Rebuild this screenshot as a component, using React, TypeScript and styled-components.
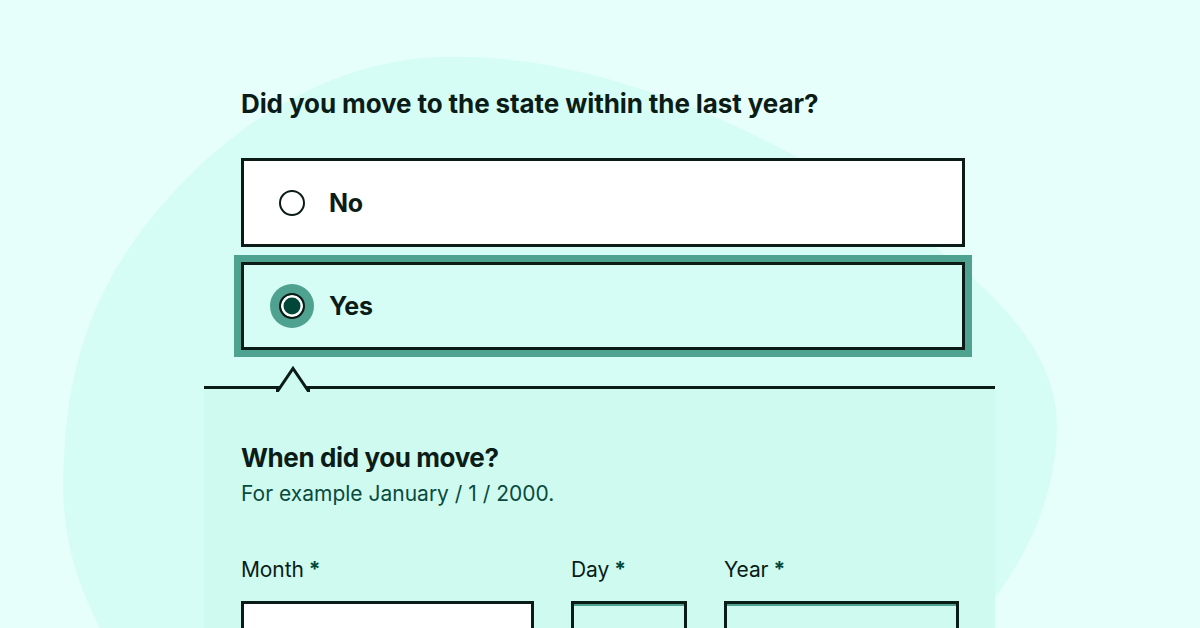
import styled, { createGlobalStyle } from "styled-components";

const GlobalStyle = createGlobalStyle`
  html, body {
    margin: 0;
    padding: 0;
    background: #e6fffa;
  }
  body {
    font-family: Inter, "Noto Sans", sans-serif;
    color: #0b1c17;
  }
`;

const Page = styled.div`
  position: relative;
  width: 1200px;
  height: 628px;
  overflow: hidden;
`;

// decorative blob behind the form
const Blob = styled.svg`
  position: absolute;
  left: 0;
  top: 0;
  z-index: 0;
`;

const Column = styled.main`
  position: relative;
  z-index: 1;
  width: 791px;
  margin-left: 204px;
  padding-top: 84px;
`;

const Fieldset = styled.fieldset`
  border: 0;
  margin: 0;
  padding: 0 30px 0 37px;
  display: flex;
  flex-direction: column;
  gap: 15px;
`;

const Legend = styled.legend`
  padding: 0;
  font-size: 26px;
  line-height: 40px;
  font-weight: 700;
  letter-spacing: -0.1px;
  margin-bottom: 19px;
  float: left;
  width: 100%;
`;

const Choice = styled.label<{ checked?: boolean }>`
  display: flex;
  align-items: center;
  gap: 24px;
  box-sizing: border-box;
  height: ${(p) => (p.checked ? "88px" : "89px")};
  padding-left: 35px;
  border: 3px solid #0b1c17;
  background: ${(p) => (p.checked ? "#d5fdf5" : "#ffffff")};
  outline: ${(p) => (p.checked ? "7px solid #4fa190" : "none")};
  font-size: 25px;
  font-weight: 700;
  letter-spacing: -0.2px;
`;

const Radio = styled.span<{ checked?: boolean }>`
  flex: none;
  box-sizing: border-box;
  width: 26px;
  height: 26px;
  border-radius: 50%;
  border: 2.5px solid #0b1c17;
  background: ${(p) => (p.checked ? "#00473a" : "#ffffff")};
  box-shadow: ${(p) =>
    p.checked ? "inset 0 0 0 2.5px #ffffff, 0 0 0 9px #4fa190" : "none"};
`;

const Panel = styled.section`
  position: relative;
  margin-top: 36px;
  border-top: 3px solid #0b1c17;
  background: #cefaf0;
  padding: 52px 36px 0 37px;
  height: 260px;
`;

const Notch = styled.svg`
  position: absolute;
  left: 72px;
  top: -24px;
`;

const PanelTitle = styled.h2`
  margin: 0;
  font-size: 26px;
  line-height: 34px;
  font-weight: 700;
  letter-spacing: -0.4px;
`;

const Hint = styled.p`
  margin: 5px 0 0;
  font-size: 21px;
  line-height: 28px;
  color: #0a4a3d;
`;

const DateRow = styled.div`
  display: grid;
  grid-template-columns: 293px 116px 235px;
  column-gap: 37px;
  margin-top: 49px;
`;

const Field = styled.div`
  display: flex;
  flex-direction: column;
  gap: 18px;
`;

const FieldLabel = styled.span`
  font-size: 21px;
  line-height: 26px;
  letter-spacing: -0.1px;
`;

const Req = styled.span`
  color: #00473a;
  font-weight: 700;
  margin-left: 5px;
`;

const Input = styled.input<{ tinted?: boolean }>`
  box-sizing: border-box;
  width: 100%;
  height: 60px;
  border: 3px solid #0b1c17;
  border-radius: 0;
  background: ${(p) => (p.tinted ? "#cefaf0" : "#ffffff")};
  box-shadow: ${(p) => (p.tinted ? "inset 0 2px 0 #4fa190" : "none")};
  font: inherit;
  margin: 0;
`;

const fields = [
  { label: "Month", tinted: false },
  { label: "Day", tinted: true },
  { label: "Year", tinted: true },
];

export default function App() {
  return (
    <>
      <GlobalStyle />
      <Page>
        <Blob width="1200" height="628" viewBox="0 0 1200 628">
          <path
            d="M100 628 C 70 570, 60 520, 64 460 C 68 340, 110 255, 190 175 C 262 104, 350 60, 440 57 C 560 52, 700 100, 820 170 C 950 250, 1060 330, 1057 430 C 1054 520, 1010 580, 972 628 Z"
            fill="#d5fdf5"
          />
        </Blob>
        <Column>
          <Fieldset>
            <Legend>Did you move to the state within the last year?</Legend>
            <Choice>
              <Radio />
              No
            </Choice>
            <Choice checked>
              <Radio checked />
              Yes
            </Choice>
          </Fieldset>
          <Panel>
            <Notch width="34" height="27" viewBox="0 0 34 27">
              <polygon points="2,25 17,3 32,25" fill="#cefaf0" />
              <polyline
                points="0,25.5 2,25.5 17,3.5 32,25.5 34,25.5"
                fill="none"
                stroke="#0b1c17"
                strokeWidth="3"
              />
            </Notch>
            <PanelTitle>When did you move?</PanelTitle>
            <Hint>For example January / 1 / 2000.</Hint>
            <DateRow>
              {fields.map((f) => (
                <Field key={f.label}>
                  <FieldLabel>
                    {f.label}
                    <Req>*</Req>
                  </FieldLabel>
                  <Input tinted={f.tinted} />
                </Field>
              ))}
            </DateRow>
          </Panel>
        </Column>
      </Page>
    </>
  );
}
